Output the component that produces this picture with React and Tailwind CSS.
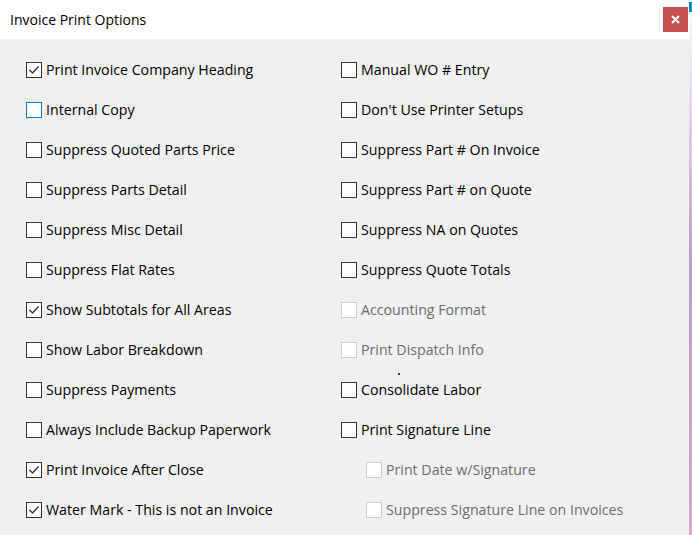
import React from "react";

const left = [
  { label: "Print Invoice Company Heading", checked: true },
  { label: "Internal Copy", focus: true },
  { label: "Suppress Quoted Parts Price" },
  { label: "Suppress Parts Detail" },
  { label: "Suppress Misc Detail" },
  { label: "Suppress Flat Rates" },
  { label: "Show Subtotals for All Areas", checked: true },
  { label: "Show Labor Breakdown" },
  { label: "Suppress Payments" },
  { label: "Always Include Backup Paperwork" },
  { label: "Print Invoice After Close", checked: true },
  { label: "Water Mark - This is not an Invoice", checked: true },
];

const right = [
  { label: "Manual WO # Entry" },
  { label: "Don't Use Printer Setups" },
  { label: "Suppress Part # On Invoice" },
  { label: "Suppress Part # on Quote" },
  { label: "Suppress NA on Quotes" },
  { label: "Suppress Quote Totals" },
  { label: "Accounting Format", disabled: true },
  { label: "Print Dispatch Info", disabled: true },
  { label: "Consolidate Labor", dot: true },
  { label: "Print Signature Line" },
  { label: "Print Date w/Signature", disabled: true, indent: true },
  { label: "Suppress Signature Line on Invoices", disabled: true, indent: true },
];

function Box({ checked, disabled, focus }) {
  const border = disabled
    ? "border-[#cccccc]"
    : focus
    ? "border-[#0078d7]"
    : "border-[#333333]";
  return (
    <span
      className={`w-4 h-4 shrink-0 border bg-white ${border} flex items-center justify-center`}
    >
      {checked && (
        <svg width="14" height="14" viewBox="0 0 14 14">
          <polyline
            points="2.5,7 5.5,10 11.5,3.5"
            fill="none"
            stroke="#333333"
            strokeWidth="1.3"
          />
        </svg>
      )}
    </span>
  );
}

function Item({ label, checked, disabled, focus, indent, dot }) {
  return (
    <div className={`relative h-10 flex items-center gap-1 ${indent ? "pl-[25px]" : ""}`}>
      {dot && (
        <span className="absolute left-[57px] top-[3px] w-[2px] h-[2px] bg-[#3030c0]" />
      )}
      <Box checked={checked} disabled={disabled} focus={focus} />
      <span
        className={`text-[14.2px] leading-none whitespace-nowrap ${
          disabled ? "text-[#6d6d6d]" : "text-black"
        }`}
      >
        {label}
      </span>
    </div>
  );
}

export default function App() {
  return (
    <div
      className="w-[692px] h-[535px] flex bg-white overflow-hidden"
      style={{ fontFamily: "'Open Sans', 'Noto Sans', sans-serif" }}
    >
      <div className="w-[689px] h-full flex flex-col">
        <div className="h-[39px] shrink-0 bg-white flex items-center justify-between pl-[10px] pr-[1px]">
          <span className="text-[14px] text-black">Invoice Print Options</span>
          <button className="w-[25px] h-[25px] bg-[#c75050] flex items-center justify-center">
            <svg width="9" height="9" viewBox="0 0 9 9">
              <path d="M1 1 L8 8 M8 1 L1 8" stroke="white" strokeWidth="2" />
            </svg>
          </button>
        </div>
        <div className="flex-1 bg-[#f0f0f0] flex pt-[11px] pl-[26px]">
          <div className="w-[315px] flex flex-col">
            {left.map((it) => (
              <Item key={it.label} {...it} />
            ))}
          </div>
          <div className="flex flex-col">
            {right.map((it) => (
              <Item key={it.label} {...it} />
            ))}
          </div>
        </div>
      </div>
      <div className="w-[3px] h-full bg-gradient-to-b from-[#ffffff] via-[#b89ac4] to-[#d6a8c8] flex flex-col">
        <div className="h-[2px] bg-white" />
        <div className="h-[10px] bg-[#0a8ad0]" />
      </div>
    </div>
  );
}
